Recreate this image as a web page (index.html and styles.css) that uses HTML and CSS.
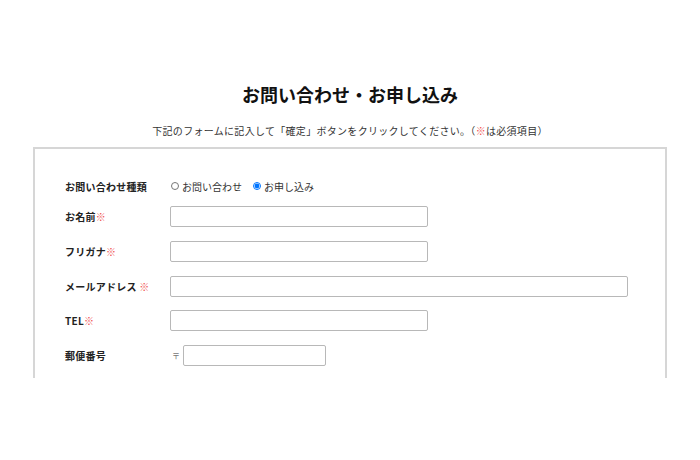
FILE: index.html
```html
<!DOCTYPE html>
<html lang="ja">
<head>
    <meta charset="UTF-8">
    <title>お問い合わせ・お申し込み</title>
    <link rel="stylesheet" href="styles.css">
</head>
<body>
    <div class="page">
        <h1>お問い合わせ・お申し込み</h1>
        <p class="lead">下記のフォームに記入して「確定」ボタンをクリックしてください。（<span class="req">※</span>は必須項目）</p>

        <form class="form-box">
            <div class="row row-radio">
                <label class="label">お問い合わせ種類</label>
                <div class="field">
                    <label class="radio"><input type="radio" name="kind">お問い合わせ</label>
                    <label class="radio"><input type="radio" name="kind" checked>お申し込み</label>
                </div>
            </div>
            <div class="row">
                <label class="label">お名前<span class="req">※</span></label>
                <div class="field"><input type="text" class="text"></div>
            </div>
            <div class="row">
                <label class="label">フリガナ<span class="req">※</span></label>
                <div class="field"><input type="text" class="text"></div>
            </div>
            <div class="row">
                <label class="label">メールアドレス <span class="req">※</span></label>
                <div class="field"><input type="text" class="text wide"></div>
            </div>
            <div class="row">
                <label class="label">TEL<span class="req">※</span></label>
                <div class="field"><input type="text" class="text"></div>
            </div>
            <div class="row">
                <label class="label">郵便番号</label>
                <div class="field"><span class="zip">〒</span><input type="text" class="text short"></div>
            </div>
        </form>
    </div>
</body>
</html>
```

FILE: styles.css
```css
body {
    margin: 0;
    background: #fff;
    color: #222;
    font-family: "Noto Sans CJK JP", "Noto Sans", sans-serif;
}
.page {
    padding-top: 81px;
}
h1 {
    margin: 0;
    font-size: 18px;
    line-height: 27px;
    font-weight: bold;
    text-align: center;
    color: #111;
}
.lead {
    margin: 15px 0 0;
    font-size: 10px;
    line-height: 16px;
    letter-spacing: 0.3px;
    text-align: center;
    color: #333;
}
.req {
    color: #f05050;
}
.form-box {
    margin: 8px 33px 0;
    height: 202px;
    padding: 27px 30px 0;
    border: 2px solid #d6d6d6;
    border-bottom: none;
    display: flex;
    flex-direction: column;
    gap: 13.75px;
}
.row {
    display: flex;
    align-items: center;
    height: 21px;
    flex-shrink: 0;
}
.row-radio {
    height: 20px;
    margin-bottom: -3.75px;
}
.label {
    width: 105px;
    flex-shrink: 0;
    font-size: 10px;
    letter-spacing: 0.25px;
    font-weight: bold;
    color: #222;
}
.field {
    display: flex;
    align-items: center;
    font-size: 10px;
    color: #333;
}
.radio {
    display: flex;
    align-items: center;
    margin-right: 10px;
}
.radio input {
    width: 8px;
    height: 8px;
    margin: 0 3px 0 1px;
}
.text {
    box-sizing: border-box;
    width: 258px;
    height: 21px;
    margin: 0;
    border: 1px solid #b8b8b8;
    border-radius: 2px;
    font-size: 10px;
}
.text.wide {
    width: 458px;
}
.text.short {
    width: 143px;
}
.zip {
    width: 13px;
    font-size: 8px;
    color: #777;
    padding-left: 2px;
    box-sizing: border-box;
}
```
